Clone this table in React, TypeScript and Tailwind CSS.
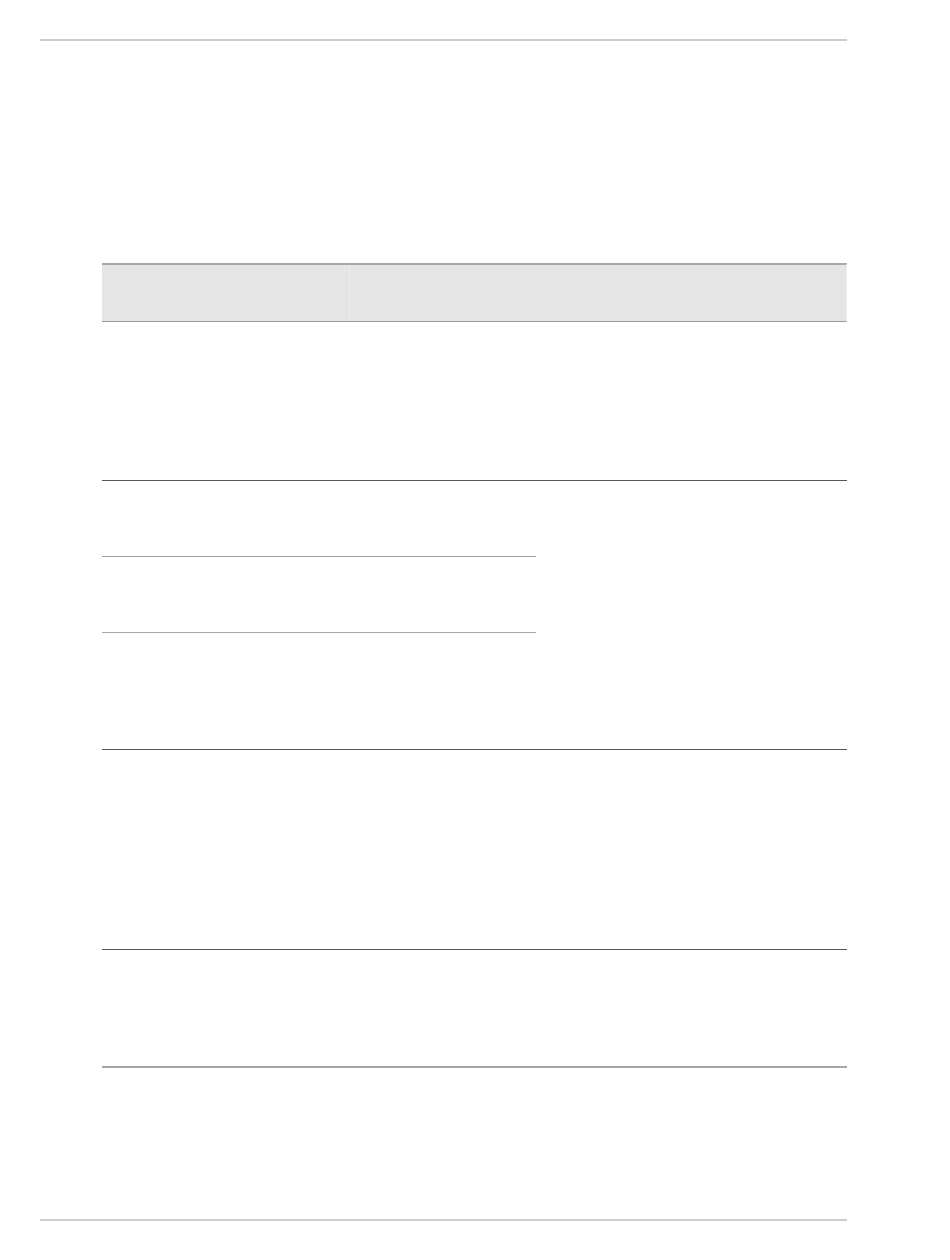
import React from 'react'

export default function App() {
    return (
        <div className="w-[950px] h-[1260px] bg-white flex flex-col">
            <div className="mt-[39px] ml-[40px] w-[807px] h-[2px] bg-[#cdcdcd]" />
            <div className="ml-[102px] mt-[222px] w-[745px] flex flex-col">
                {/* header */}
                <div className="flex h-[59px] border-t-2 border-b border-t-[#a8a8a8] border-b-[#9a9a9a] bg-[#e5e5e5] border-r border-r-[#eeeeee]">
                    <div className="w-[248px] border-r border-r-[#ececec]" />
                    <div className="flex-1" />
                </div>
                <div className="h-[159px] border-b border-b-[#555555]" />
                <div className="h-[269px] border-b border-b-[#555555] flex flex-col">
                    <div className="w-[434px] h-[76px] border-b border-b-[#a0a0a0]" />
                    <div className="w-[434px] h-[76px] border-b border-b-[#a8a8a8]" />
                </div>
                <div className="h-[200px] border-b border-b-[#555555]" />
                <div className="h-[118px] border-b-2 border-b-[#a6a6a6]" />
            </div>
            <div className="mt-[151px] ml-[40px] w-[807px] h-[2px] bg-[#cdcdcd]" />
        </div>
    )
}
